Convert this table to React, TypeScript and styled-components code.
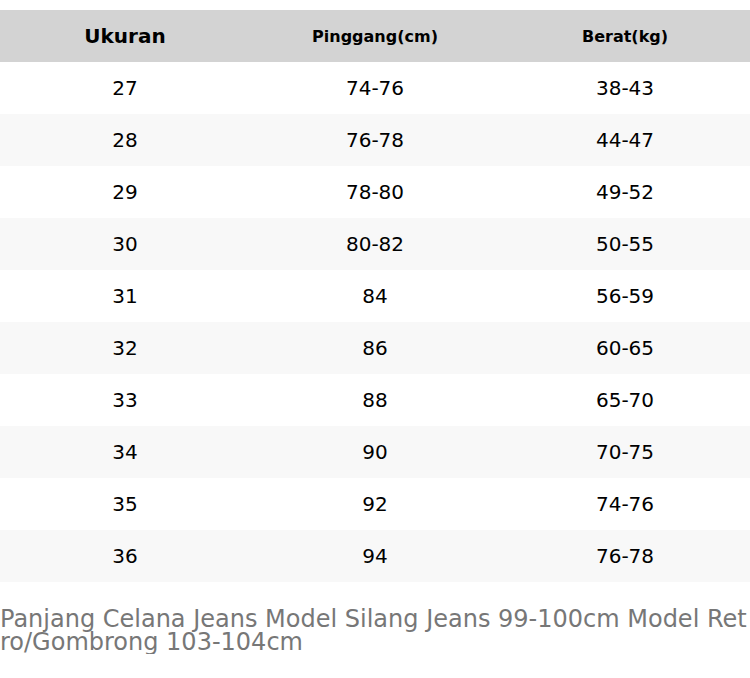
import React from 'react';
import styled, { createGlobalStyle } from 'styled-components';

const GlobalStyle = createGlobalStyle`
  body {
    margin: 0;
    background: #fff;
    font-family: 'DejaVu Sans', sans-serif;
  }
`;

const Page = styled.div`
  padding-top: 10px;
`;

const Table = styled.table`
  width: 750px;
  border-collapse: collapse;
  table-layout: fixed;
`;

const HeadRow = styled.tr`
  background: #d3d3d3;
  height: 52px;
`;

const HeadCell = styled.th<{ $big?: boolean }>`
  font-size: ${p => (p.$big ? '20px' : '16px')};
  font-weight: bold;
  color: #000;
  text-align: center;
  padding: 0;
`;

const Row = styled.tr<{ $alt: boolean }>`
  height: 52px;
  background: ${p => (p.$alt ? '#f8f8f8' : '#fff')};
`;

const Cell = styled.td`
  font-size: 20px;
  color: #000;
  text-align: center;
  padding: 0;
`;

const Note = styled.p`
  margin: 26px 0 0;
  font-size: 24px;
  line-height: 23px;
  color: #777;
  word-break: break-all;
`;

const rows = [
  ['27', '74-76', '38-43'],
  ['28', '76-78', '44-47'],
  ['29', '78-80', '49-52'],
  ['30', '80-82', '50-55'],
  ['31', '84', '56-59'],
  ['32', '86', '60-65'],
  ['33', '88', '65-70'],
  ['34', '90', '70-75'],
  ['35', '92', '74-76'],
  ['36', '94', '76-78'],
];

export default function App() {
  return (
    <Page>
      <GlobalStyle />
      <Table>
        <thead>
          <HeadRow>
            <HeadCell $big>Ukuran</HeadCell>
            <HeadCell>Pinggang(cm)</HeadCell>
            <HeadCell>Berat(kg)</HeadCell>
          </HeadRow>
        </thead>
        <tbody>
          {rows.map((r, i) => (
            <Row key={r[0]} $alt={i % 2 === 1}>
              {r.map((c, j) => (
                <Cell key={j}>{c}</Cell>
              ))}
            </Row>
          ))}
        </tbody>
      </Table>
      <Note>Panjang Celana Jeans Model Silang Jeans 99-100cm Model Retro/Gombrong 103-104cm</Note>
    </Page>
  );
}
